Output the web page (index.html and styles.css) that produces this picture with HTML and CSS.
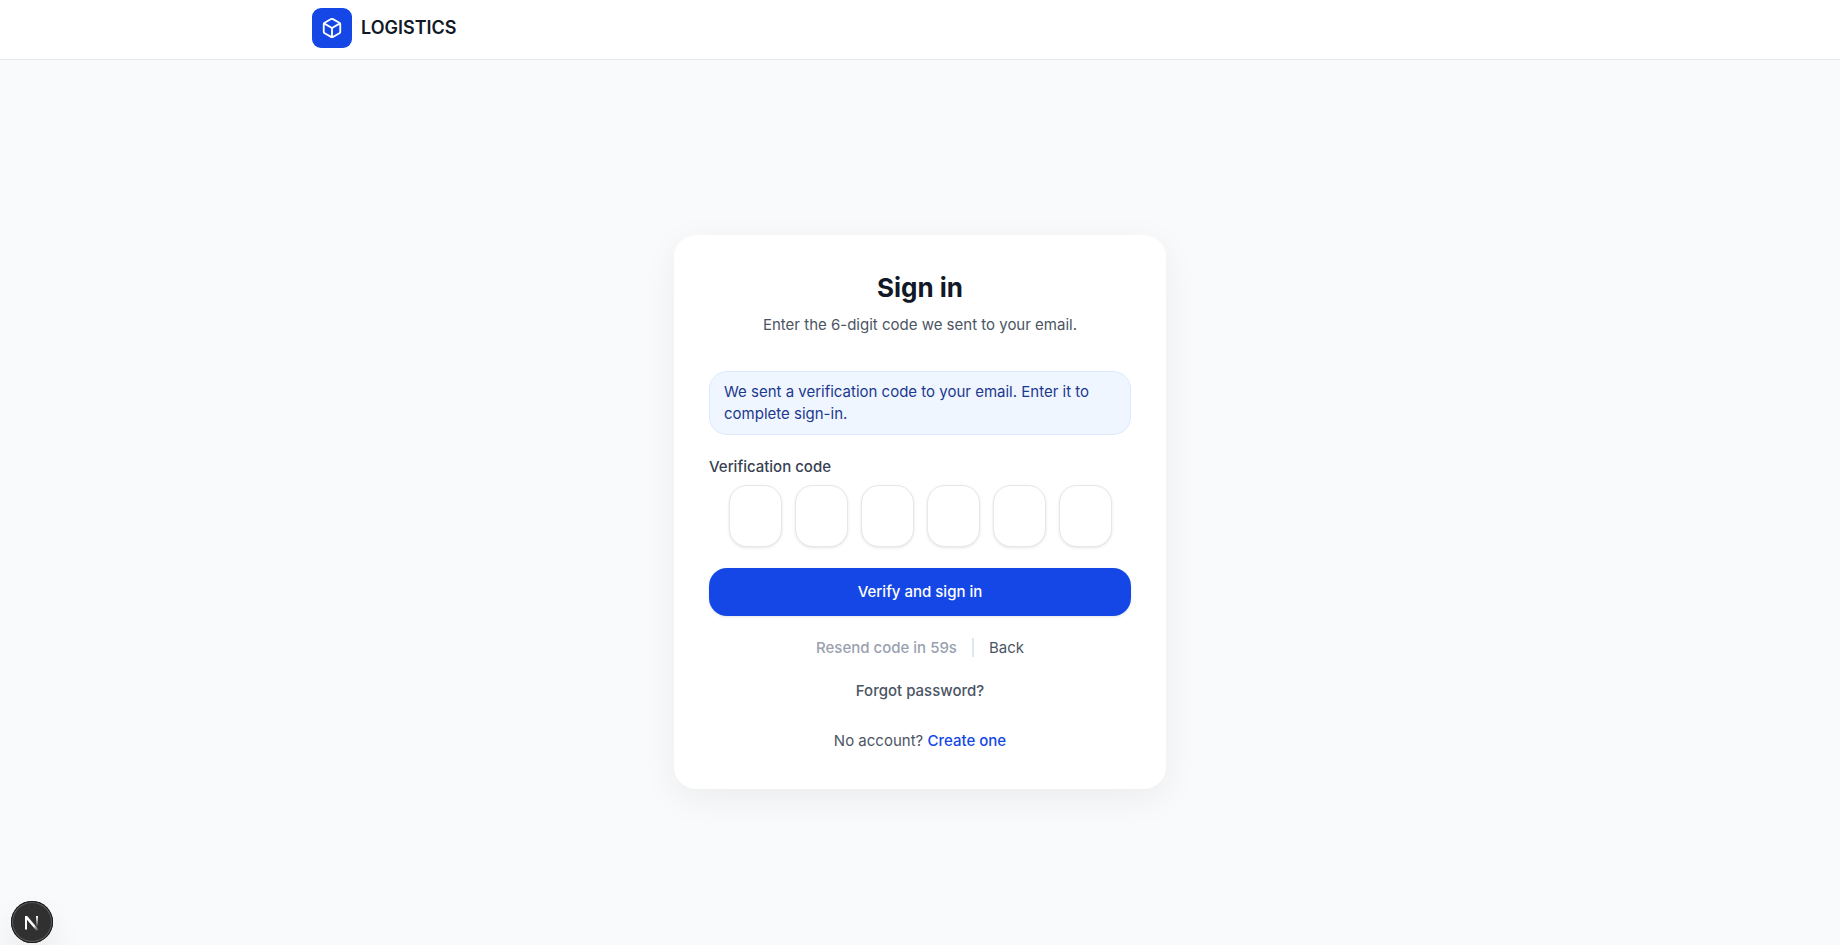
FILE: index.html
```html
<!DOCTYPE html>
<html lang="en">
<head>
  <meta charset="UTF-8" />
  <meta name="viewport" content="width=device-width, initial-scale=1" />
  <title>Sign in - Logistics</title>
  <link rel="stylesheet" href="styles.css">
</head>
<body>
  <header class="site-header">
    <div class="header-inner">
      <a class="brand" href="#">
        <span class="brand-icon">
          <svg width="22" height="22" viewBox="0 0 24 24" fill="none" stroke="currentColor" stroke-width="2" stroke-linecap="round" stroke-linejoin="round" aria-hidden="true">
            <path d="M21 8a2 2 0 0 0-1-1.73l-7-4a2 2 0 0 0-2 0l-7 4A2 2 0 0 0 3 8v8a2 2 0 0 0 1 1.73l7 4a2 2 0 0 0 2 0l7-4A2 2 0 0 0 21 16Z" />
            <path d="m3.3 7 8.7 5 8.7-5" />
            <path d="M12 22V12" />
          </svg>
        </span>
        <span class="brand-name">LOGISTICS</span>
      </a>
    </div>
  </header>

  <main class="page">
    <section class="card">
      <h1>Sign in</h1>
      <p class="subtitle">Enter the 6-digit code we sent to your email.</p>

      <form class="code-form" onsubmit="return false">
        <p class="notice" role="status">We sent a verification code to your email. Enter it to complete sign-in.</p>

        <div class="field">
          <label for="code-1">Verification code</label>
          <div class="code-inputs">
            <input type="text" id="code-1" inputmode="numeric" maxlength="1" autocomplete="one-time-code" />
            <input type="text" inputmode="numeric" maxlength="1" aria-label="Digit 2" />
            <input type="text" inputmode="numeric" maxlength="1" aria-label="Digit 3" />
            <input type="text" inputmode="numeric" maxlength="1" aria-label="Digit 4" />
            <input type="text" inputmode="numeric" maxlength="1" aria-label="Digit 5" />
            <input type="text" inputmode="numeric" maxlength="1" aria-label="Digit 6" />
          </div>
        </div>

        <button type="submit" class="submit-btn">Verify and sign in</button>

        <div class="actions">
          <button type="button" class="text-btn resend" disabled>Resend code in 59s</button>
          <span class="divider"></span>
          <button type="button" class="text-btn">Back</button>
        </div>

        <a class="forgot" href="#">Forgot password?</a>
      </form>

      <p class="signup">No account? <a href="#">Create one</a></p>
    </section>
  </main>

  <button type="button" class="dev-badge" aria-label="Open dev tools">
    <svg width="42" height="42" viewBox="0 0 42 42" fill="none" aria-hidden="true">
      <defs>
        <linearGradient id="diagonal" x1="22" y1="23" x2="27" y2="30" gradientUnits="userSpaceOnUse">
          <stop offset="0.2" stop-color="#fff" />
          <stop offset="1" stop-color="#fff" stop-opacity="0" />
        </linearGradient>
        <linearGradient id="stem" x1="26" y1="15" x2="26" y2="26" gradientUnits="userSpaceOnUse">
          <stop stop-color="#fff" />
          <stop offset="1" stop-color="#fff" stop-opacity="0" />
        </linearGradient>
      </defs>
      <path d="M15 28.5V15.5" stroke="#fff" stroke-width="2" />
      <path d="M14 15h2.2L27.5 28.6l-1.6 1.6L14 16.5Z" fill="url(#diagonal)" />
      <path d="M26 15V26" stroke="url(#stem)" stroke-width="2" />
    </svg>
  </button>
</body>
</html>
```

FILE: styles.css
```css
* {
  box-sizing: border-box;
}

body {
  font-family: Inter, "Liberation Sans", sans-serif;
  font-size: 15px;
  line-height: 22px;
  margin: 0;
  min-height: 100vh;
  display: flex;
  flex-direction: column;
  background: #f9fafb;
  color: #4b5563;
}

h1, p {
  margin: 0;
}

a {
  text-decoration: none;
}

input, button {
  font: inherit;
}

.site-header {
  background: #fff;
  border-bottom: 1px solid #e5e7eb;
}

.header-inner {
  max-width: 1232px;
  margin: 0 auto;
  padding: 8px 8px 11px;
}

.brand {
  display: inline-flex;
  align-items: center;
  gap: 9px;
  vertical-align: top;
  color: #111827;
}

.brand-icon {
  width: 40px;
  height: 40px;
  display: flex;
  align-items: center;
  justify-content: center;
  background: #1447e6;
  border-radius: 9px;
  color: #fff;
}

.brand-name {
  font-size: 18px;
  font-weight: 600;
}

.page {
  flex: 1;
  display: flex;
  align-items: center;
  justify-content: center;
  padding: 18px 18px 0;
}

.card {
  width: 100%;
  max-width: 492px;
  padding: 35px 35px 37px;
  background: #fff;
  border-radius: 22px;
  box-shadow: 0 9px 35px rgba(0, 0, 0, 0.06);
  text-align: center;
}

h1 {
  font-size: 26px;
  font-weight: 700;
  line-height: 35px;
  color: #111827;
}

.subtitle {
  margin-top: 9px;
}

.code-form {
  display: flex;
  flex-direction: column;
  gap: 21px;
  margin-top: 35px;
}

.notice {
  padding: 9px 14px;
  border: 1px solid #dbeafe;
  border-radius: 18px;
  background: #eff6ff;
  color: #1c398e;
  text-align: left;
}

.field {
  display: flex;
  flex-direction: column;
  gap: 7px;
}

.field label {
  font-weight: 500;
  text-align: left;
  color: #374151;
}

.code-inputs {
  display: flex;
  justify-content: center;
  gap: 13px;
}

.code-inputs input {
  width: 53px;
  height: 62px;
  padding: 0;
  border: 1px solid #e5e7eb;
  border-radius: 18px;
  background: #fff;
  box-shadow: 0 1px 3px rgba(0, 0, 0, 0.1);
  font-size: 22px;
  font-weight: 600;
  text-align: center;
  color: #111827;
}

.submit-btn {
  height: 48px;
  border: none;
  border-radius: 18px;
  background: #1447e6;
  box-shadow: 0 1px 3px rgba(0, 0, 0, 0.1);
  color: #fff;
  font-weight: 500;
  cursor: pointer;
}

.submit-btn:hover {
  background: #193cb8;
}

.actions {
  display: flex;
  align-items: center;
  justify-content: center;
  gap: 15px;
}

.text-btn {
  padding: 0;
  border: none;
  background: none;
  color: #4b5563;
  cursor: pointer;
}

.resend:disabled {
  color: #99a1af;
  font-weight: 500;
  cursor: default;
}

.divider {
  width: 2px;
  height: 19px;
  background: #dbe7f3;
}

.forgot {
  align-self: center;
  color: #4b5563;
  font-weight: 500;
}

.signup {
  margin-top: 28px;
}

.signup a {
  color: #1447e6;
  font-weight: 500;
}

/* floating badge, bottom left of the window */
.dev-badge {
  position: fixed;
  left: 11px;
  bottom: 2px;
  width: 42px;
  height: 42px;
  padding: 0;
  border: none;
  border-radius: 50%;
  background: #303030;
  box-shadow: inset 0 0 0 1px #171717, inset 0 0 0 2px #5c5c5c, 0 18px 35px rgba(0, 0, 0, 0.08);
  cursor: pointer;
}

.dev-badge svg {
  display: block;
}
```
